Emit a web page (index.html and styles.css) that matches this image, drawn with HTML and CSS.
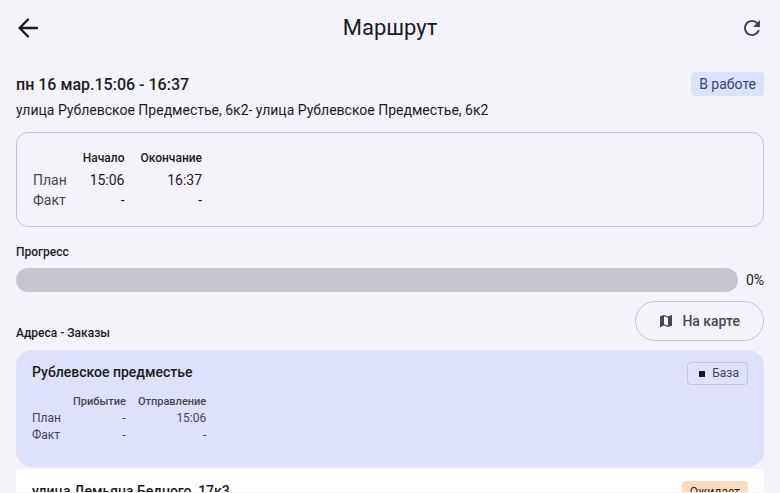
FILE: index.html
```
<!DOCTYPE html>
<html lang="ru">
<head>
  <meta charset="UTF-8">
  <meta name="viewport" content="width=device-width, initial-scale=1.0">
  <title>Маршрут</title>
  <link rel="stylesheet" href="styles.css">
</head>
<body>
  <header class="app-bar">
    <button type="button" class="icon-btn back" aria-label="Назад">
      <svg width="24" height="24" viewBox="0 0 24 24" fill="none" stroke="currentColor" stroke-width="2.3" stroke-linecap="round"><path d="M21 12H4M12 3.500L3.700 12l8.300 8.500"/></svg>
    </button>
    <h1>Маршрут</h1>
    <button type="button" class="icon-btn" aria-label="Обновить">
      <svg width="24" height="24" viewBox="0 0 24 24" fill="currentColor"><path d="M17.65 6.35C16.2 4.9 14.21 4 12 4c-4.42 0-7.99 3.58-7.99 8s3.57 8 7.99 8c3.73 0 6.84-2.55 7.73-6h-2.08c-.82 2.33-3.04 4-5.65 4-3.31 0-6-2.69-6-6s2.69-6 6-6c1.66 0 3.14.69 4.22 1.78L13 11h7V4l-2.35 2.35z"/></svg>
    </button>
  </header>
  <main>
    <div class="route-head">
      <h2>пн 16 мар.15:06 - 16:37</h2>
      <span class="status">В работе</span>
    </div>
    <p class="address">улица Рублевское Предместье, 6к2- улица Рублевское Предместье, 6к2</p>
    <section class="summary">
      <table class="times">
        <thead>
          <tr><td></td><th scope="col">Начало</th><th scope="col">Окончание</th></tr>
        </thead>
        <tbody>
          <tr><th scope="row">План</th><td>15:06</td><td>16:37</td></tr>
          <tr><th scope="row">Факт</th><td>-</td><td>-</td></tr>
        </tbody>
      </table>
    </section>
    <h3 id="progress-label">Прогресс</h3>
    <div class="progress">
      <div class="track" role="progressbar" aria-labelledby="progress-label" aria-valuenow="0" aria-valuemin="0" aria-valuemax="100"></div>
      <span>0%</span>
    </div>
    <div class="orders-head">
      <h3>Адреса - Заказы</h3>
      <button type="button" class="map-btn">
        <svg width="16" height="16" viewBox="0 0 24 24" fill="currentColor"><path d="M20.5 3l-.16.03L15 5.1 9 3 3.36 4.9c-.21.07-.36.25-.36.48V20.5c0 .28.22.5.5.5l.16-.03L9 18.9l6 2.1 5.64-1.9c.21-.07.36-.25.36-.48V3.5c0-.28-.22-.5-.5-.5zM15 19l-6-2.11V5l6 2.11V19z"/></svg>
        На карте
      </button>
    </div>
    <div class="stops">
      <article class="stop current">
        <div class="stop-head">
          <h4>Рублевское предместье</h4>
          <span class="tag"><span class="dot"></span>База</span>
        </div>
        <table class="times small">
          <thead>
            <tr><td></td><th scope="col">Прибытие</th><th scope="col">Отправление</th></tr>
          </thead>
          <tbody>
            <tr><th scope="row">План</th><td>-</td><td>15:06</td></tr>
            <tr><th scope="row">Факт</th><td>-</td><td>-</td></tr>
          </tbody>
        </table>
      </article>
      <article class="stop">
        <div class="stop-head">
          <h4>улица Демьяна Бедного, 17к3</h4>
          <span class="tag waiting">Ожидает</span>
        </div>
      </article>
    </div>
  </main>
</body>
</html>
```
FILE: styles.css
```
* {
  padding: 0;
  margin: 0;
  box-sizing: border-box;
}
body {
  height: 100vh;
  display: flex;
  flex-direction: column;
  overflow: hidden;
  padding-bottom: 1px;
  background-color: #F4F3FA;
  color: #1A1B21;
  font-family: Roboto, "Liberation Sans", sans-serif;
  font-size: 14px;
  line-height: 20px;
}
button {
  font: inherit;
  color: #45464F;
  background: none;
  border: none;
  cursor: pointer;
}
.app-bar {
  flex: none;
  height: 56px;
  padding: 0 8px;
  display: flex;
  align-items: center;
  justify-content: space-between;
}
.app-bar h1 {
  font-size: 22px;
  font-weight: 400;
  line-height: 28px;
}
.icon-btn {
  width: 40px;
  height: 40px;
  display: grid;
  place-items: center;
}
.icon-btn.back {
  color: #1A1B21;
}
main {
  flex: 1;
  min-height: 0;
  overflow: hidden;
  padding: 16px 16px 0;
}
.route-head {
  display: flex;
  justify-content: space-between;
  align-items: flex-start;
}
.route-head h2 {
  font-size: 16px;
  font-weight: 500;
  line-height: 26px;
}
.status {
  padding: 2px 8px;
  border-radius: 4px;
  background-color: #DBE1FF;
  color: #334478;
}
.address {
  margin-top: 2px;
}
.summary {
  margin: 12px 0 17px;
  padding: 17px 16px 16px;
  border: 1px solid #C6C6D0;
  border-radius: 12px;
}
.times {
  border-collapse: collapse;
}
.times th,
.times td {
  padding: 0 0 0 16px;
  font-weight: 400;
  text-align: right;
}
.times thead th {
  padding-bottom: 4px;
  font-size: 12px;
  font-weight: 500;
  line-height: 16px;
}
.times tbody th {
  color: #45464F;
  text-align: left;
}
.times tr > :first-child {
  padding-left: 0;
}
h3 {
  font-size: 12px;
  font-weight: 500;
  line-height: 16px;
}
.progress {
  display: flex;
  align-items: center;
  gap: 8px;
  margin: 8px 0;
}
.track {
  flex: 1;
  height: 24px;
  border-radius: 12px;
  background-color: #C6C6D0;
}
.orders-head {
  display: flex;
  justify-content: space-between;
  align-items: flex-end;
  margin-top: 9px;
}
.map-btn {
  display: flex;
  align-items: center;
  gap: 8px;
  height: 40px;
  padding: 0 23px 0 22px;
  border: 1px solid #C6C6D0;
  border-radius: 20px;
  font-weight: 500;
}
.stops {
  display: flex;
  flex-direction: column;
  gap: 2px;
  margin-top: 9px;
}
.stop {
  padding: 12px 16px;
  border-radius: 4px;
  background-color: #FFF;
}
.stop.current {
  padding-bottom: 23px;
  border-radius: 16px;
  background-color: #DDE1F9;
}
.stop-head {
  display: flex;
  justify-content: space-between;
  align-items: flex-start;
}
.stop h4 {
  font-size: 14px;
  font-weight: 500;
}
.tag {
  display: flex;
  align-items: center;
  gap: 7px;
  padding: 3px 8px;
  border: 1px solid #C6C6D0;
  border-radius: 4px;
  color: #45464F;
  font-size: 12px;
  line-height: 15px;
}
.tag.waiting {
  padding: 4px 8px;
  border: none;
  background-color: #FFDCBE;
  color: #2C1600;
}
.dot {
  width: 6px;
  height: 6px;
  margin-left: 3px;
  background-color: #1A1B21;
}
.times.small {
  margin-top: 8px;
  color: #45464F;
  font-size: 12px;
  line-height: 17px;
}
.times.small th,
.times.small td {
  padding-left: 12px;
}
.times.small tr > :first-child {
  padding-left: 0;
}
.times.small thead th {
  padding-bottom: 0;
  font-size: 11px;
  line-height: 17px;
}
```
